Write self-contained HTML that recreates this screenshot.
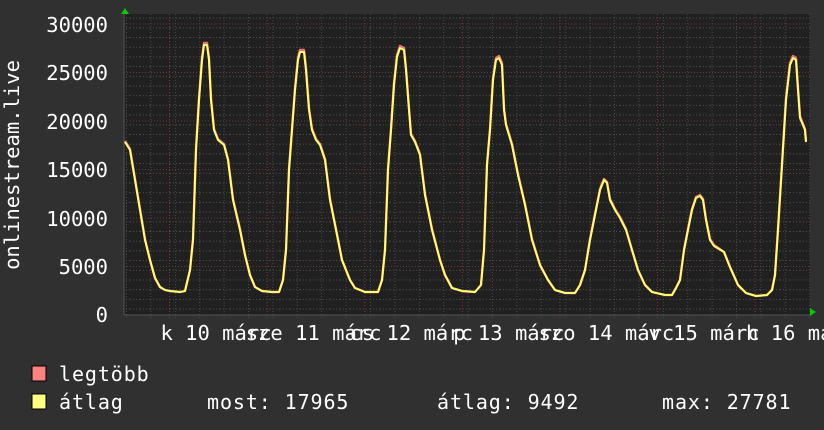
<!DOCTYPE html>
<html><head><meta charset="utf-8"><style>
html,body{margin:0;padding:0;background:#303030;}
svg{display:block}
text{font-family:"DejaVu Sans Mono","Liberation Mono",monospace;fill:#fff}
</style></head><body>
<svg width="824" height="430" viewBox="0 0 824 430" xmlns="http://www.w3.org/2000/svg">
<defs>
<pattern id="hmin" x="0" y="7.9" width="10" height="9.7" patternUnits="userSpaceOnUse">
<line x1="0" y1="0.5" x2="10" y2="0.5" stroke="#4a4a4a" stroke-width="1" stroke-dasharray="1,2"/>
</pattern>
</defs>
<rect x="124" y="14" width="686" height="301" fill="#202020"/>
<rect x="124" y="14" width="686" height="301" fill="url(#hmin)"/>
<g stroke="#4a4a4a" stroke-width="1" stroke-dasharray="1,2" id="vmin"></g>
<g id="grid"></g>
<g fill="none" stroke-linejoin="round">
<polyline id="red" stroke="#f07070" stroke-width="2.4"/>
<polyline id="yel" stroke="#ffff70" stroke-width="2"/>
</g>
<polygon points="121,14 129,14 125,8" fill="#00cc00"/>
<polygon points="810,308 810,316 816,312" fill="#00cc00"/>
<g font-size="20.5" text-anchor="end">
<text x="108" y="32">30000</text>
<text x="108" y="80">25000</text>
<text x="108" y="129">20000</text>
<text x="108" y="177">15000</text>
<text x="108" y="226">10000</text>
<text x="108" y="274">5000</text>
<text x="108" y="322">0</text>
</g>
<text font-size="20.5" transform="translate(19,165) rotate(-90)" text-anchor="middle">onlinestream.live</text>
<g font-size="20.5" text-anchor="middle" id="xl"></g>
<rect x="32" y="366" width="14" height="15" fill="#ff8080" stroke="#000" stroke-width="1"/>
<rect x="32" y="394" width="14" height="15" fill="#ffff80" stroke="#000" stroke-width="1"/>
<g font-size="20" letter-spacing="0.9">
<text x="59" y="381">legtöbb</text>
<text x="59" y="409">átlag</text>
<text x="207" y="409">most: 17965</text>
<text x="437" y="409">átlag: 9492</text>
<text x="662" y="409">max: 27781</text>
</g>
</svg>
<script>
var NS="http://www.w3.org/2000/svg";
function el(t,a,p){var e=document.createElementNS(NS,t);for(var k in a)e.setAttribute(k,a[k]);p.appendChild(e);return e;}
var g=document.getElementById('grid'),vm=document.getElementById('vmin');
for(var x=126.5;x<810;x+=24.4){el('line',{x1:x,y1:14,x2:x,y2:318},vm);}
for(var i=0;i<7;i++){var y=315-48.5*i;if(i>0)el('line',{x1:124,y1:y,x2:810,y2:y,stroke:'#6a3a3a','stroke-dasharray':'1,2'},g);}
for(var i=0;i<7;i++){var x=169.5+97.6*i;el('line',{x1:x,y1:14,x2:x,y2:320,stroke:'#7a3a3a','stroke-dasharray':'1,2'},g);}
el('line',{x1:124,y1:315,x2:810,y2:315,stroke:'#555'},g);
el('line',{x1:124,y1:14,x2:124,y2:315,stroke:'#555'},g);
var lab=["k 10 márc","sze 11 márc","cs 12 márc","p 13 márc","szo 14 márc","v 15 márc","h 16 márc"];
var xl=document.getElementById('xl');
for(var i=0;i<7;i++){var t=el('text',{x:216+97.6*i,y:340},xl);t.textContent=lab[i];}
var p="125,142 130,150 135,180 140,210 145,240 150,260 155,278 160,287 165,290 170,291 180,292 185,291 190,270 193,240 196,150 199,100 202,60 204,45 207,45 209,60 211,100 214,130 218,140 224,145 228,160 233,200 240,230 245,255 250,275 255,287 262,291 272,292 279,292 283,280 286,250 289,170 292,130 295,90 298,60 300,52 304,52 306,70 309,110 312,130 316,140 320,145 325,160 330,200 337,235 342,260 350,280 355,288 365,292 378,292 382,280 385,250 388,170 391,130 394,85 397,57 400,48 404,50 406,70 409,110 411,135 415,142 420,155 425,195 432,230 440,260 445,275 452,288 462,291 475,292 481,285 484,250 487,165 490,130 493,80 496,60 499,58 502,65 504,110 506,125 512,145 518,175 525,205 532,240 540,265 548,280 555,290 565,293 575,293 580,285 585,270 590,240 595,215 600,190 604,180 607,183 610,200 615,210 620,218 626,230 632,250 638,270 645,285 652,292 665,295 672,295 676,288 680,280 684,250 688,230 692,210 696,198 700,196 703,200 706,220 710,240 714,246 724,252 730,267 738,285 746,293 756,296 767,295 772,290 775,275 778,230 782,165 786,100 790,65 793,58 796,60 798,90 800,118 805,130 806,142";
document.getElementById('yel').setAttribute('points',p);
var rp=p.split(' ').map(function(s){var a=s.split(',');var y=+a[1];var d=y<120?2:(y<250?1:0);return a[0]+','+(y-d);}).join(' ');
document.getElementById('red').setAttribute('points',rp);
</script>
</body></html>
